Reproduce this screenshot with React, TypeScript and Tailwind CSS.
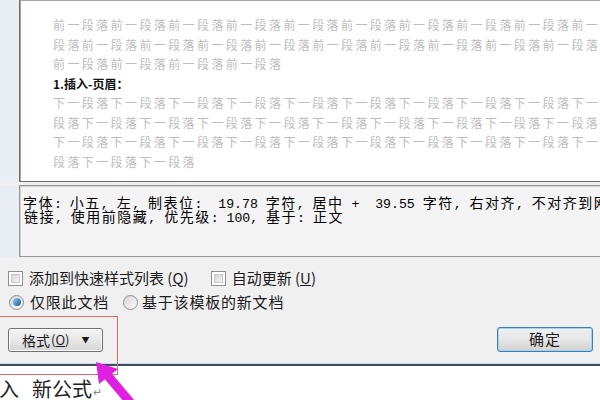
import React from "react";

function Mixed({ text }: { text: string }) {
  const runs: { t: string; c: boolean }[] = [];
  for (const ch of text) {
    const c = /[\u2e80-\u9fff\uff00-\uffef\u3000-\u303f]/.test(ch);
    const last = runs[runs.length - 1];
    if (last && last.c === c) last.t += ch;
    else runs.push({ t: ch, c });
  }
  return (
    <>
      {runs.map((r, i) =>
        r.c ? (
          <span key={i} className="font-['Noto_Sans_CJK_SC',sans-serif] text-[14px] tracking-[1.5px]">
            {r.t}
          </span>
        ) : (
          <span key={i} className="font-['Liberation_Mono',monospace] text-[13.2px] tracking-normal">
            {r.t}
          </span>
        )
      )}
    </>
  );
}

function CheckBox() {
  return (
    <span className="w-[15px] h-[15px] border border-[#8f8f8f] bg-white p-[2px] shrink-0 block">
      <span className="block w-full h-full bg-linear-to-br from-[#d2d2d2] to-[#f7f7f7] border border-[#c8c8c8]" />
    </span>
  );
}

function Radio({ on }: { on?: boolean }) {
  return (
    <span className="w-[15px] h-[15px] rounded-full border border-[#8f8f8f] bg-linear-to-br from-[#d6d6d6] to-[#fbfbfb] flex items-center justify-center shrink-0">
      {on && <span className="w-[8px] h-[8px] rounded-full bg-linear-to-br from-[#8fd0f5] to-[#1a5a92]" />}
    </span>
  );
}

const prev = "前一段落";
const next = "下一段落";

export default function App() {
  const lines = [
    { t: prev.repeat(12), b: false },
    { t: "段落" + prev.repeat(12), b: false },
    { t: prev.repeat(4), b: false },
    { t: "1.插入-页眉：", b: true },
    { t: next.repeat(12), b: false },
    { t: "段落" + next.repeat(12), b: false },
    { t: next.repeat(12), b: false },
    { t: "段落下一段落下一段落", b: false },
  ];
  return (
    <div className="relative w-[600px] h-[400px] overflow-hidden bg-white font-['Noto_Sans_CJK_SC',sans-serif] text-black">
      {/* dialog */}
      <div className="h-[366px] bg-[#f0f0f0] border-b-2 border-[#3f4f5f] shadow-[inset_0_-1px_0_#c6dbeb] flex flex-col">
        {/* preview */}
        <div className="flex h-[183px] -mt-[1px]">
          <div className="w-[19px] bg-[#e9eef3] shrink-0" />
          <div className="w-[600px] shrink-0 bg-white border border-[#6d6d6d] shadow-[inset_1px_1px_0_#a6a6a6] overflow-hidden pt-[15px] pl-[33px]">
            {lines.map((l, i) =>
              l.b ? (
                <div key={i} className="h-[19.5px] leading-[19.5px] text-[12px] font-bold text-[#111] whitespace-nowrap">
                  {l.t}
                </div>
              ) : (
                <div key={i} className="h-[19.5px] leading-[19.5px] text-[12px] tracking-[2.4px] text-[#bdbdbd] whitespace-nowrap">
                  {l.t}
                </div>
              )
            )}
          </div>
        </div>

        {/* description */}
        <div className="flex mt-[3px] h-[72px]">
          <div className="w-[19px] bg-[#e9eef3] shrink-0" />
          <div className="w-[600px] shrink-0 bg-[#f4f4f4] border border-[#979797] shadow-[inset_1px_1px_0_#d0d0d0] pt-[8px] pl-[3px] leading-[14px] whitespace-pre text-[#000]">
            <div className="h-[14px]">
              <Mixed text="字体: 小五, 左, 制表位:  19.78 字符, 居中 +  39.55 字符, 右对齐, 不对齐到网格" />
            </div>
            <div className="h-[14px] pl-[1px]">
              <Mixed text="链接, 使用前隐藏, 优先级: 100, 基于: 正文" />
            </div>
          </div>
        </div>

        {/* checkboxes */}
        <div className="flex items-center h-[20px] mt-[11px] pl-[8px] text-[15px] leading-[20px] text-[#1a1a1a]">
          <CheckBox />
          <span className="ml-[6px]">
            添加到快速样式列表 (<span className="underline">Q</span>)
          </span>
          <span className="ml-[22px]">
            <CheckBox />
          </span>
          <span className="ml-[6px]">
            自动更新 (<span className="underline">U</span>)
          </span>
        </div>
        <div className="flex items-center h-[20px] mt-[4px] pl-[9px] text-[15px] leading-[20px] tracking-[0.8px] text-[#1a1a1a]">
          <Radio on />
          <span className="ml-[6px]">仅限此文档</span>
          <span className="ml-[14px]">
            <Radio />
          </span>
          <span className="ml-[4px]">基于该模板的新文档</span>
        </div>

        {/* buttons */}
        <div className="flex items-start h-[25px] mt-[15px]">
          <button className="ml-[8px] mt-[1px] w-[95px] h-[24px] rounded-[3px] border border-[#707070] bg-linear-to-b from-[#f4f4f4] via-[#e8e8e8] to-[#d6d6d6] shadow-[inset_0_0_0_1px_#fbfbfb] flex items-center pl-[13px] text-[14px] text-[#1a1a1a]">
            <span>格式</span>
            <span className="ml-[1px] text-[13px]">
              (<span className="underline">O</span>)
            </span>
            <span className="ml-[12px] text-[8px]">▼</span>
          </button>
          <button className="ml-auto mr-[7px] w-[96px] h-[25px] rounded-[3px] border border-[#3c7fb1] bg-linear-to-b from-[#f1f1f1] via-[#e6e6e6] to-[#d2d2d2] shadow-[inset_0_0_0_1px_#9fd3f0] flex items-center justify-center text-[15px] text-[#1a1a1a] tracking-[1px]">
            确定
          </button>
        </div>
      </div>

      {/* document text below */}
      <div className="flex items-start pt-[12px] text-[20px] leading-[22px] text-[#222]">
        <span className="w-[33px] -ml-[1px]">入</span>
        <span>新公式</span>
        <span className="ml-[1px] mt-[8px] text-[11px] leading-[11px] text-[#888]">↵</span>
      </div>

      {/* red highlight */}
      <div className="absolute left-[-2px] top-[316px] w-[120px] h-[59px] border border-[#e06a6a]" />

      {/* magenta arrow */}
      <svg className="absolute left-0 top-0 pointer-events-none" width="600" height="400" viewBox="0 0 600 400">
        <polygon points="96,362 99,384 118,369" fill="#e11fe0" />
        <polygon points="104.6,378.9 111.4,373.1 143.4,411.1 136.6,416.9" fill="#e11fe0" />
      </svg>
    </div>
  );
}
